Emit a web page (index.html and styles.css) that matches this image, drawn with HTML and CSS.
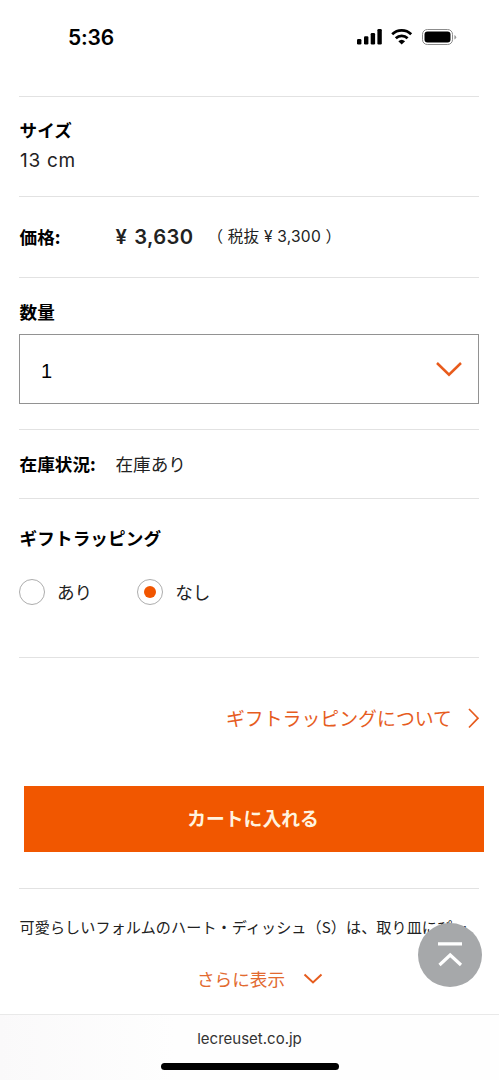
FILE: index.html
```html
<!DOCTYPE html>
<html lang="ja">
<head>
<meta charset="utf-8">
<meta name="viewport" content="width=device-width, initial-scale=1">
<title>lecreuset.co.jp</title>
<link rel="stylesheet" href="styles.css">
</head>
<body>
<div class="screen">
  <header class="status">
    <span class="clock">5:36</span>
    <svg class="status-icons" width="102" height="20" viewBox="0 0 102 20">
      <rect x="1" y="12" width="4.4" height="5.5" rx="1.2"/>
      <rect x="8" y="9.3" width="4.4" height="8.2" rx="1.2"/>
      <rect x="14.7" y="6" width="4.4" height="11.5" rx="1.2"/>
      <rect x="21.4" y="2" width="4.4" height="15.5" rx="1.2"/>
      <g fill="none" stroke="#000" stroke-width="2.7">
        <path d="M36.2 7.2a13.6 13.6 0 0 1 19 0"/>
        <path d="M39.8 11.3a8.4 8.4 0 0 1 11.8 0"/>
      </g>
      <path d="M42.3 14.3a5 5 0 0 1 6.8 0l-3.4 3.3z"/>
      <rect x="66.5" y="2.5" width="30" height="15" rx="4.8" fill="none" stroke="#8c8c8c"/>
      <rect x="68.5" y="4.5" width="26" height="11" rx="3"/>
      <path d="M98.4 8v4.6q1.8-.8 1.8-2.3t-1.8-2.3" fill="#999"/>
    </svg>
  </header>

  <main class="product">
    <section class="row size">
      <h2 class="label">サイズ</h2>
      <p class="size-value">13 cm</p>
    </section>
    <section class="row price">
      <h2 class="label side-label">価格:</h2>
      <span class="amount">¥ 3,630</span>
      <span class="net">（ 税抜 ¥ 3,300 ）</span>
    </section>
    <section class="row quantity">
      <h2 class="label">数量</h2>
      <div class="select">
        <span>1</span>
        <svg width="28" height="18" viewBox="0 0 28 18"><path d="M2 3l12 11.7L26 3"/></svg>
      </div>
    </section>
    <section class="row stock">
      <h2 class="label side-label">在庫状況:</h2>
      <span class="stock-value">在庫あり</span>
    </section>
    <section class="row wrapping">
      <h2 class="label">ギフトラッピング</h2>
      <div class="options">
        <span class="option"><i class="radio"></i>あり</span>
        <span class="option"><i class="radio checked"></i>なし</span>
      </div>
    </section>
    <section class="row purchase">
      <a class="about"><span>ギフトラッピングについて</span>
        <svg width="14" height="22" viewBox="0 0 14 22"><path d="M2 2l9 9.2-9 9.3"/></svg></a>
      <div class="cart"><span>カートに入れる</span></div>
    </section>
    <section class="row description">
      <p class="summary">可愛らしいフォルムのハート・ディッシュ（S）は、取り皿にぴ…</p>
      <a class="more"><span>さらに表示</span>
        <svg width="20" height="14" viewBox="0 0 20 14"><path d="M1.5 2.5l8.5 8 8.5-8"/></svg></a>
      <div class="to-top">
        <svg width="64" height="64" viewBox="0 0 64 64"><path d="M20 20.8h24M21.5 42l10.7-10L43 42"/></svg>
      </div>
    </section>
  </main>

  <footer class="browser-bar">
    <span class="address">lecreuset.co.jp</span>
    <div class="home"></div>
  </footer>
</div>
</body>
</html>
```

FILE: styles.css
```css
* { box-sizing: border-box; }
body {
  margin: 0;
  background: #fff;
  color: #000;
  font-family: "Liberation Sans", "Noto Sans CJK JP", sans-serif;
}
h2, p { margin: 0; }
svg { display: block; flex: none; }
.screen {
  width: 499px;
  height: 1080px;
  display: flex;
  flex-direction: column;
  overflow: hidden;
}
.status {
  height: 96px;
  flex: none;
  display: flex;
  justify-content: space-between;
  align-items: flex-start;
  padding: 27px 41px 0 68px;
}
.clock { font: 600 21px/21px Inter, sans-serif; letter-spacing: -.2px; }
.product { height: 918px; flex: none; padding: 0 20px 0 19px; }
.row { border-top: 1px solid #e2e2e2; white-space: nowrap; }
.label { font: 700 17.6px/26px "Noto Sans CJK JP", sans-serif; padding-left: .6px; }
.side-label { width: 96.5px; flex: none; }

.size { height: 100px; padding-top: 20px; }
.size-value { font: 400 19px/26px Inter, "Noto Sans CJK JP", sans-serif; margin-top: 5px; padding-left: 1px; letter-spacing: .7px; color: #222; }
.price { height: 81px; display: flex; align-items: center; }
.amount { font: 600 20.2px/26px Inter, "Noto Sans CJK JP", sans-serif; letter-spacing: .35px; word-spacing: 1.6px; color: #222; }
.net { font: 400 15.6px/26px Inter, "Noto Sans CJK JP", sans-serif; letter-spacing: .2px; margin-left: 14px; color: #222; }

.quantity { height: 152px; padding-top: 21px; }
.select {
  height: 70px;
  margin-top: 9px;
  border: 1px solid #929292;
  display: flex;
  align-items: center;
  justify-content: space-between;
  padding: 4px 15px 0 21px;
  font-size: 20px;
}
.select svg { margin-bottom: 4px; }
.select path { fill: none; stroke: #e85b1c; stroke-width: 2.5; }

.stock { height: 69px; display: flex; align-items: center; }
.stock-value { font: 400 17.6px/26px "Noto Sans CJK JP", sans-serif; color: #222; }

.wrapping { height: 159px; padding-top: 26px; }
.wrapping .label { letter-spacing: .1px; }
.options { display: flex; gap: 45px; margin-top: 28px; }
.option { display: flex; align-items: center; gap: 12px; font: 400 17.6px/26px "Noto Sans CJK JP", sans-serif; color: #222; }
.radio { width: 26px; height: 26px; border: 1px solid #adadad; border-radius: 50%; display: grid; place-items: center; }
.checked::after { content: ""; width: 12px; height: 12px; border-radius: 50%; background: #f15500; }

.purchase { height: 231px; padding-top: 47px; }
.about { display: flex; align-items: center; justify-content: flex-end; gap: 15px; height: 26px; margin-right: -2px; color: #e65c1e; font: 400 18.9px/26px "Noto Sans CJK JP", sans-serif; }
.about path, .more path { fill: none; stroke: #e65c1e; stroke-width: 1.7; }
.cart {
  height: 66px;
  margin: 55px -5px 0 5px;
  padding: 0 2px 3px 0;
  background: #f15700;
  color: #fff3df;
  display: grid;
  place-items: center;
  font: 700 18.8px/26px "Noto Sans CJK JP", sans-serif;
}

.description { position: relative; height: 126px; padding-top: 24px; }
.summary { font: 400 15.1px/26px "Noto Sans CJK JP", sans-serif; padding-left: .6px; letter-spacing: .08px; color: #222; }
.more { display: flex; justify-content: center; align-items: center; gap: 18px; margin-top: 27px; padding-left: 22px; height: 26px; color: #e26a30; font: 400 17.6px/26px "Noto Sans CJK JP", sans-serif; }
.more path { stroke-width: 2; }
.to-top { position: absolute; right: -3px; top: 34px; width: 64px; height: 64px; border-radius: 50%; background: #a6a8aa; }
.to-top path { fill: none; stroke: #fff; stroke-width: 3.2; }

.browser-bar {
  height: 66px;
  flex: none;
  border-top: 1px solid #e9e9e9;
  background: linear-gradient(90deg, #faf9fa, #fefefe 35%);
  display: flex;
  flex-direction: column;
  align-items: center;
  padding-top: 14px;
}
.address { font: 400 15px/20px Inter, sans-serif; color: #333; }
.home { width: 178px; height: 7px; margin-top: 14px; border-radius: 4px; background: #000; }
```
